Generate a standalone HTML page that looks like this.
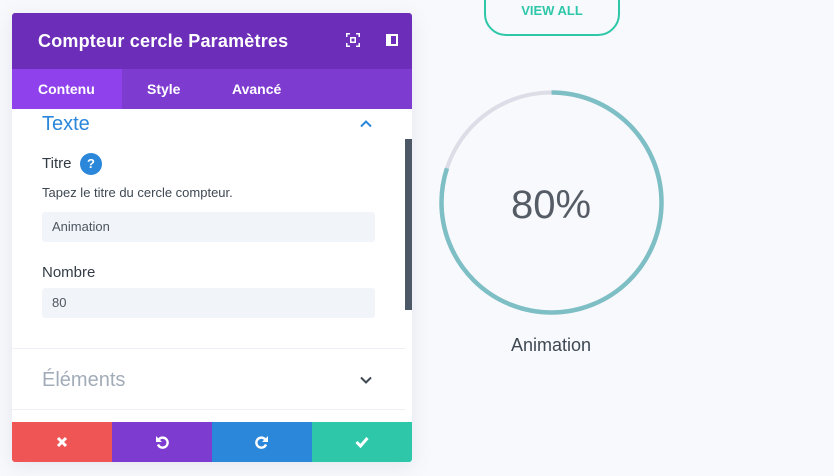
<!DOCTYPE html>
<html><head><meta charset="utf-8"><style>
*{margin:0;padding:0;box-sizing:border-box}
body{width:834px;height:476px;overflow:hidden;background:#f8f9fc;font-family:"Liberation Sans",sans-serif;position:relative}
.abs{position:absolute}
.panel{left:12px;top:13px;width:400px;height:449px;background:#fff;border-radius:3px;overflow:hidden;box-shadow:0 4px 20px rgba(80,100,140,.12)}
.hdr{left:0;top:0;width:400px;height:56px;background:#6c2eb9;color:#fff;font-weight:bold;font-size:18px;line-height:56px;padding-left:26px;letter-spacing:0.2px}
.tabs{left:0;top:56px;width:400px;height:40px;background:#7e3bd0}
.tab{position:absolute;top:0;height:40px;line-height:40px;color:#fff;font-weight:bold;font-size:14px}
.lbl{color:#333c46;font-size:15px}
.inp{left:30px;width:333px;height:30px;background:#f1f4f8;border-radius:3px;font-size:13px;color:#4d5660;line-height:30px;padding-left:10px}
.btn{top:409px;width:100px;height:40px}
</style></head><body>
<div class="abs" style="left:484px;top:-20px;width:136px;height:56px;border:2px solid #2ec7a9;border-radius:22px"></div>
<div class="abs" style="left:484px;top:3px;width:136px;text-align:center;color:#2ec7a9;font-weight:bold;font-size:13px">VIEW ALL</div>
<svg class="abs" style="left:431px;top:82px" width="241" height="241">
<circle cx="120.5" cy="120.5" r="110" fill="none" stroke="#dcdde6" stroke-width="4"/>
<circle cx="120.5" cy="120.5" r="110" fill="none" stroke="#7ebec5" stroke-width="4.5" stroke-dasharray="552.9 700" transform="rotate(-90 120.5 120.5)"/>
</svg>
<div class="abs" style="left:451px;top:183px;width:200px;text-align:center;font-size:40px;color:#555c66">80%</div>
<div class="abs" style="left:451px;top:335px;width:200px;text-align:center;font-size:18px;color:#3e4852">Animation</div>

<div class="abs panel">
<div class="abs hdr">Compteur cercle Paramètres</div>
<svg class="abs" style="left:334px;top:20px" width="14" height="14" viewBox="0 0 14 14" fill="#fff"><path d="M0 0h4v1.5H1.5V4H0zM10 0h4v4h-1.5V1.5H10zM0 10h1.5v2.5H4V14H0zM12.5 10H14v4h-4v-1.5h2.5zM4 4h6v6H4zM5.5 5.5v3h3v-3z"/></svg>
<svg class="abs" style="left:374px;top:21px" width="12" height="12" viewBox="0 0 12 12" fill="#fff"><path d="M0 0h12v12H0zM5 2v8h5V2zM2 2.5h2v2H2zM2 5.5h2v2H2zM2 8.5h2v1.5H2z"/></svg>
<div class="abs tabs">
<div class="tab" style="left:0;width:110px;background:#8f42ec;padding-left:26px">Contenu</div>
<div class="tab" style="left:135px">Style</div>
<div class="tab" style="left:220px">Avancé</div>
</div>
<div class="abs" style="left:30px;top:100px;font-size:20px;color:#2b87da">Texte</div>
<svg class="abs" style="left:348px;top:107px" width="12" height="8" viewBox="0 0 12 8"><path d="M1 6.5L6 1.5l5 5" fill="none" stroke="#2b87da" stroke-width="2"/></svg>
<div class="abs" style="left:393px;top:126px;width:7px;height:171px;background:#4c5866"></div>
<div class="abs lbl" style="left:30px;top:142px">Titre</div>
<div class="abs" style="left:68px;top:140px;width:22px;height:22px;border-radius:50%;background:#2b87da;color:#fff;font-weight:bold;font-size:13px;text-align:center;line-height:22px">?</div>
<div class="abs" style="left:30px;top:172px;font-size:13px;color:#3e4852">Tapez le titre du cercle compteur.</div>
<div class="abs inp" style="top:199px">Animation</div>
<div class="abs lbl" style="left:30px;top:251px">Nombre</div>
<div class="abs inp" style="top:275px">80</div>
<div class="abs" style="left:0;top:335px;width:393px;height:1px;background:#eef0f5"></div>
<div class="abs" style="left:30px;top:356px;font-size:20px;color:#a2acb8">Éléments</div>
<svg class="abs" style="left:348px;top:363px" width="12" height="8" viewBox="0 0 12 8"><path d="M1 1.5L6 6.5l5-5" fill="none" stroke="#3e4852" stroke-width="2"/></svg>
<div class="abs" style="left:0;top:396px;width:393px;height:1px;background:#eef0f5"></div>
<div class="abs btn" style="left:0;background:#ef5555"></div>
<div class="abs btn" style="left:100px;background:#7e3bd0"></div>
<div class="abs btn" style="left:200px;background:#2b87da"></div>
<div class="abs btn" style="left:300px;background:#2ec7a9"></div>
<svg class="abs" style="left:44px;top:423px" width="12" height="12" viewBox="0 0 12 12"><path d="M2 2l8 8M10 2l-8 8" stroke="#fff" stroke-width="3"/></svg>
<svg class="abs" style="left:143px;top:422px" width="14" height="14" viewBox="0 0 14 14"><path d="M4 4.2A5 5 0 1 1 3 9.5" fill="none" stroke="#fff" stroke-width="2.4"/><path d="M1 1v6h6z" fill="#fff"/></svg>
<svg class="abs" style="left:243px;top:422px" width="14" height="14" viewBox="0 0 14 14"><path d="M10 4.2A5 5 0 1 0 11 9.5" fill="none" stroke="#fff" stroke-width="2.4"/><path d="M13 1v6H7z" fill="#fff"/></svg>
<svg class="abs" style="left:343px;top:423px" width="14" height="12" viewBox="0 0 14 12"><path d="M1.5 6l4 4 7-8" fill="none" stroke="#fff" stroke-width="3"/></svg>
</div>
</body></html>
